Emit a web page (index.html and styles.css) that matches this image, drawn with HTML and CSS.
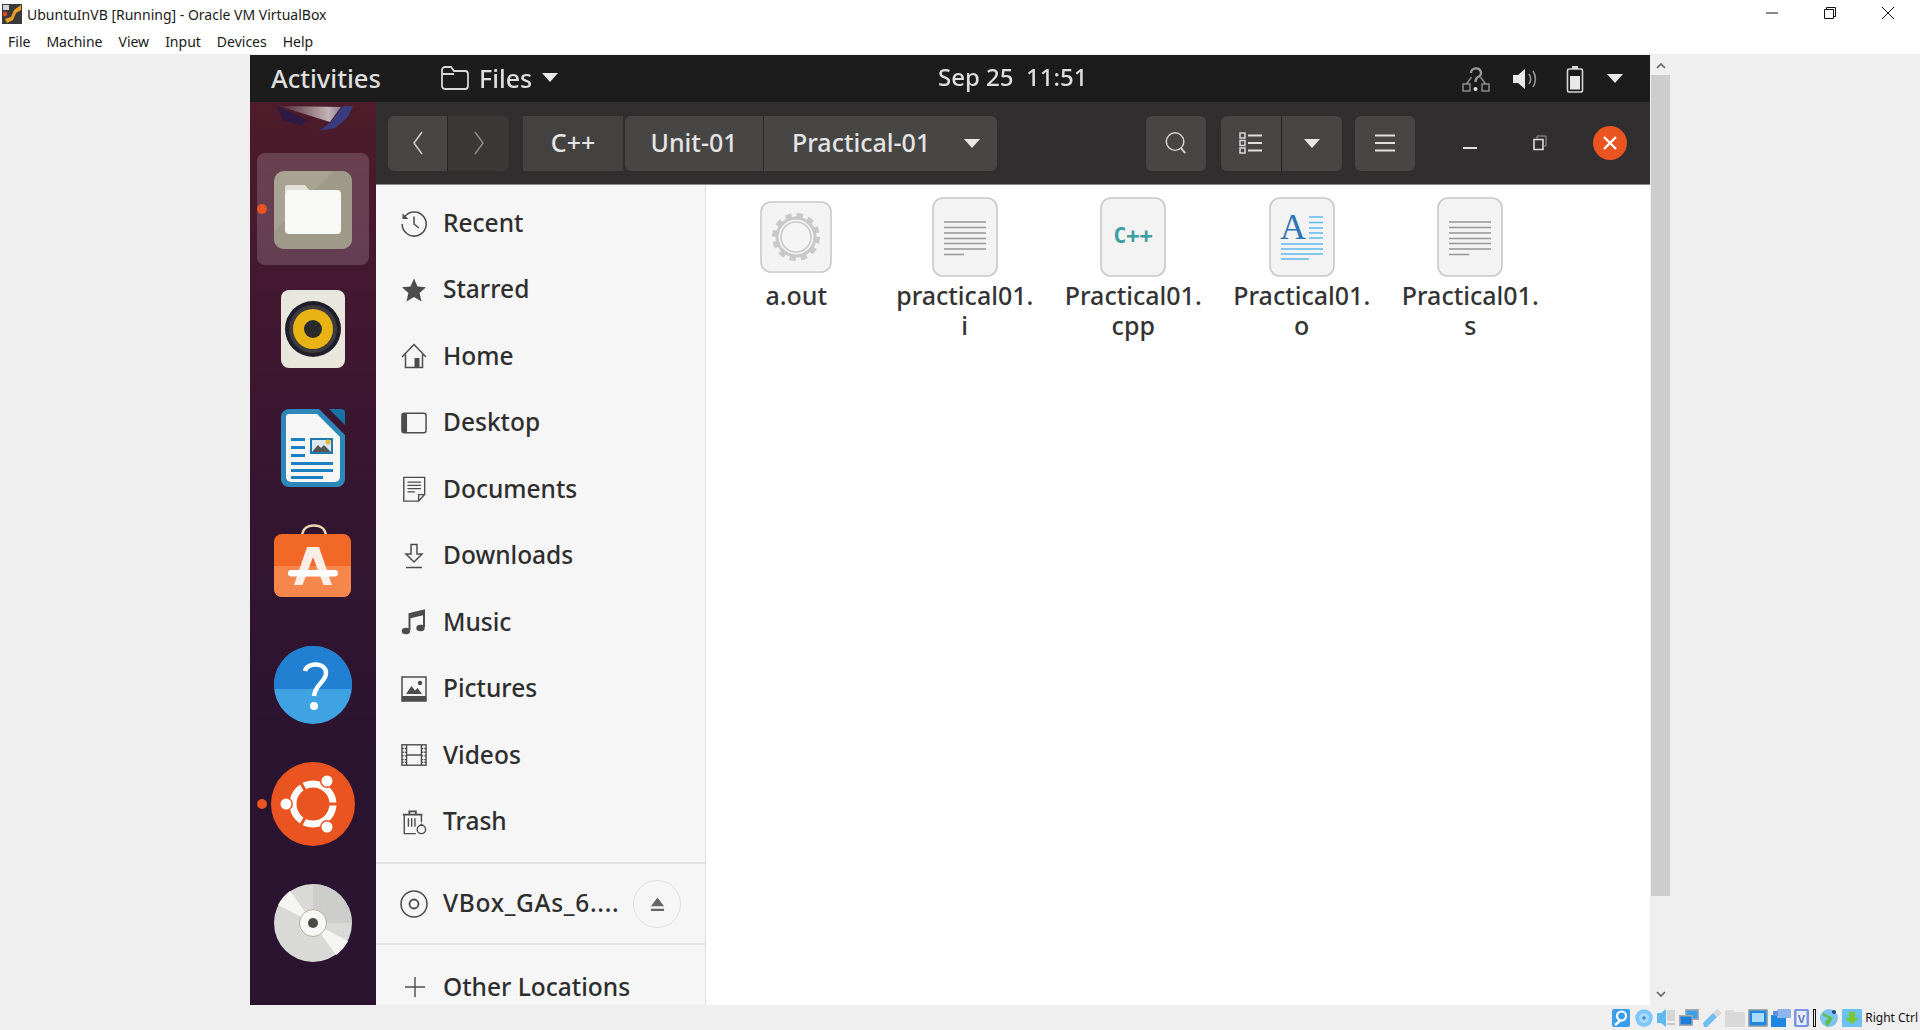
FILE: index.html
```html
<!DOCTYPE html>
<html lang="en">
<head>
<meta charset="utf-8">
<title>UbuntuInVB [Running] - Oracle VM VirtualBox</title>
<link rel="stylesheet" href="styles.css">
</head>
<body>
<div class="titlebar">
  <svg class="vbox-logo" viewBox="0 0 20 20"><rect width="20" height="20" fill="#3a3a3a"/><rect x="1" y="1" width="6" height="5" fill="#cfd6de"/><path d="M3 15 L9 13 L12 6 L19 1 V6 L14 9 L11 16 L5 19 Z" fill="#f0a020"/><circle cx="3" cy="10" r="2.4" fill="#d84a20"/></svg>
  <span class="title-text">UbuntuInVB [Running] - Oracle VM VirtualBox</span>
  <div class="win-controls">
    <svg class="win-btn" viewBox="0 0 14 14"><path d="M1 7H13" stroke="#111" fill="none"/></svg>
    <svg class="win-btn" viewBox="0 0 14 14"><path d="M1.5 3.5H10.5V12.5H1.5Z M3.5 3.5V1.5H12.5V10.5H10.5" stroke="#111" fill="none"/></svg>
    <svg class="win-btn" viewBox="0 0 14 14"><path d="M1 1L13 13M13 1L1 13" stroke="#111" fill="none"/></svg>
  </div>
</div>
<div class="menubar"><span>File</span><span>Machine</span><span>View</span><span>Input</span><span>Devices</span><span>Help</span></div>

<div class="host">
  <div class="vm">
    <div class="topbar">
      <span class="activities">Activities</span>
      <div class="appmenu">
        <svg class="ic-top-folder" viewBox="0 0 30 26"><path d="M2 5a3 3 0 0 1 3-3h6l3 4h11a3 3 0 0 1 3 3v12a3 3 0 0 1-3 3H5a3 3 0 0 1-3-3Z M2 9H14" fill="none" stroke="#d8d8d8" stroke-width="1.8"/></svg>
        <span>Files</span>
        <i class="caret"></i>
      </div>
      <span class="clock">Sep 25&nbsp; 11:51</span>
      <div class="tray">
        <svg class="tray-net" viewBox="0 0 30 28"><path d="M10 8a5 4.500 0 1 1 7 4c-2 1-2.500 2-2.500 5" fill="none" stroke="#9a9a9a" stroke-width="2.400"/><circle cx="14.500" cy="24" r="2" fill="#e0e0e0"/><path d="M2 19h7v7H2Z M21 19h7v7h-7Z M5.500 19l5-7M24.500 19l-5-7" fill="none" stroke="#8a8a8a" stroke-width="1.500"/></svg>
        <svg class="tray-vol" viewBox="0 0 26 24"><path d="M1 8h5l7-6v20l-7-6H1Z" fill="#e8e8e8"/><path d="M17 7c2 3 2 7 0 10M21 4c3 5 3 11 0 16" fill="none" stroke="#9a9a9a" stroke-width="1.500"/></svg>
        <svg class="tray-bat" viewBox="0 0 18 28"><path d="M6 1h6v3H6Z" fill="#d8d8d8"/><rect x="1.500" y="4" width="15" height="23" rx="1.500" fill="none" stroke="#d8d8d8" stroke-width="1.600"/><rect x="4" y="11" width="10" height="13.500" fill="#e8e8e8"/></svg>
        <i class="caret"></i>
      </div>
    </div>
    <div class="desk">
      <aside class="dock">
        <svg class="wall" viewBox="0 0 78 28"><defs><linearGradient id="wallTri" x1="0" x2="1" y1="0" y2="0"><stop offset="0" stop-color="#4a2035"/><stop offset=".8" stop-color="#c4b4b4"/><stop offset="1" stop-color="#8a7a90"/></linearGradient></defs><path d="M2 2L8 16L26 22L32 16Z" fill="#2d1b45"/><path d="M4 2L55 18L66 3Z" fill="url(#wallTri)"/><path d="M68 2H78L72 14L60 24L44 27L56 18Z" fill="#3a3c80"/></svg>
        <div class="slot active">
          <i class="dot"></i>
          <svg class="app" viewBox="0 0 78 78"><rect width="78" height="78" rx="10" fill="#a8a392"/><path d="M0 60 L60 0 H68 a10 10 0 0 1 10 10 V68 a10 10 0 0 1-10 10 H10 a10 10 0 0 1-10-10Z" fill="#9e9988"/><path d="M11 17a3 3 0 0 1 3-3h17l6 7H11Z" fill="#e3e0d7"/><rect x="11" y="19" width="56" height="44" rx="4" fill="#f8f8f7"/></svg>
        </div>
        <div class="slot">
          <svg class="app" viewBox="0 0 64 78"><rect width="64" height="78" rx="8" fill="#e9e6de"/><circle cx="32" cy="39" r="28" fill="#1f1f2b"/><circle cx="32" cy="39" r="24" fill="#3d3b3f"/><circle cx="32" cy="39" r="20" fill="#eab314"/><circle cx="32" cy="39" r="9" fill="#2b2b2b"/></svg>
        </div>
        <div class="slot">
          <svg class="app" viewBox="0 0 64 78"><path d="M8 0H38L64 26V70a8 8 0 0 1-8 8H8a8 8 0 0 1-8-8V8a8 8 0 0 1 8-8Z" fill="#2b88b8"/><path d="M48 0H60a4 4 0 0 1 4 4V16Z" fill="#1673a6"/><path d="M8 5H36L59 28V68a5 5 0 0 1-5 5H10a5 5 0 0 1-5-5V8a3 3 0 0 1 3-3Z" fill="#f6f6f6"/><path d="M10 29h14v3H10ZM10 37h14v3H10ZM10 45h14v3H10ZM10 53h42v3H10ZM10 60h42v3H10ZM10 67h32v3H10Z" fill="#1b80c0"/><rect x="29" y="29" width="23" height="16" fill="#1c7ab0"/><rect x="31" y="31" width="19" height="12" fill="#dce8ee"/><path d="M31 43l6-7 3 3 3-3 7 7Z" fill="#555"/><circle cx="47" cy="33" r="2.500" fill="#e8b830"/></svg>
        </div>
        <div class="slot">
          <svg class="app app-store" viewBox="0 0 78 78"><path d="M28 12C29 3 34 1.500 40 1.500S51 3 52 12" fill="none" stroke="#e9d7ae" stroke-width="2.500"/><rect x="0" y="10" width="77" height="63" rx="8" fill="#f26826"/><path d="M0 42H77V65a8 8 0 0 1-8 8H8a8 8 0 0 1-8-8Z" fill="#f6874c"/><path d="M33 23H45L58 61H49.500L39 33L28.500 61H20Z" fill="#fbeee6"/><rect x="14" y="46" width="50" height="6.500" rx="3.200" fill="#fff"/></svg>
        </div>
        <div class="slot">
          <svg class="app app-up" viewBox="0 0 78 78"><circle cx="39" cy="39" r="39" fill="#3fa2e2"/><path d="M.2 43A39 39 0 1 1 77.800 43Z" fill="#2280d2"/><path d="M31 25c2-9 21-9 21 2 0 9-11 11-12 23" fill="none" stroke="#fff" stroke-width="4.500"/><circle cx="40" cy="60" r="4" fill="#fff"/></svg>
        </div>
        <div class="slot">
          <i class="dot"></i>
          <svg class="app app-ubuntu app-up" viewBox="0 0 84 84"><circle cx="42" cy="42" r="42" fill="#e95420"/><circle cx="42" cy="42" r="20" fill="none" stroke="#fff" stroke-width="7"/><path d="M42 42H68M42 42L29 64.500M42 42L29 19.500" stroke="#e95420" stroke-width="3"/><circle cx="15" cy="42" r="7" fill="#e95420"/><circle cx="15" cy="42" r="5.500" fill="#fff"/><circle cx="56" cy="19" r="7" fill="#e95420"/><circle cx="56" cy="19" r="5.500" fill="#fff"/><circle cx="56" cy="65" r="7" fill="#e95420"/><circle cx="56" cy="65" r="5.500" fill="#fff"/></svg>
        </div>
        <div class="slot">
          <svg class="app app-up" viewBox="0 0 78 78"><circle cx="39" cy="39" r="39" fill="#d9d9d7"/><path d="M39 39L4 21A39 39 0 0 1 16 7Z" fill="#f5f5f2"/><path d="M39 0A39 39 0 0 1 78 39H39Z" fill="#cdcdcb"/><path d="M39 39L74 57A39 39 0 0 1 62 71Z" fill="#f5f5f2"/><circle cx="39" cy="39" r="13.500" fill="#f7f7f5" stroke="#b5ae9c" stroke-width="1"/><circle cx="39" cy="39" r="5" fill="#4a4a4a"/></svg>
        </div>
      </aside>
      <div class="window">
        <div class="header">
          <div class="btn-group nav">
            <button class="btn btn-back"><svg class="nav-ic" viewBox="0 0 14 26"><path d="M11 2L3 13L11 24" fill="none" stroke="#cfcfcf" stroke-width="1.500"/></svg></button>
            <button class="btn btn-forward"><svg class="nav-ic" viewBox="0 0 14 26"><path d="M3 2L11 13L3 24" fill="none" stroke="#8b8b8b" stroke-width="1.500"/></svg></button>
          </div>
          <div class="path">
            <span class="crumb crumb-cpp">C++</span>
            <span class="crumb crumb-unit">Unit-01</span>
            <span class="crumb crumb-prac">Practical-01<i class="caret"></i></span>
          </div>
          <div class="spring"></div>
          <button class="btn btn-single"><svg class="hd-ic" viewBox="0 0 26 26"><circle cx="12" cy="11.500" r="9.500" fill="none" stroke="#d4d4d4" stroke-width="1.600"/><path d="M18 18l5 6" stroke="#d4d4d4" stroke-width="2"/></svg></button>
          <div class="btn-group view">
            <button class="btn btn-list"><svg class="hd-ic" viewBox="0 0 24 24"><path d="M1 2h5v5H1Z M1 9.500h5v5H1Z M1 17h5v5H1Z" fill="none" stroke="#d8d8d8" stroke-width="1.500"/><path d="M9 4.500h14M9 12h14M9 19.500h14" stroke="#e0e0e0" stroke-width="1.800"/></svg></button>
            <button class="btn btn-drop"><i class="caret"></i></button>
          </div>
          <button class="btn btn-single btn-menu"><svg class="hd-ic" viewBox="0 0 24 24"><path d="M2 4.500H22M2 12H22M2 19.500H22" stroke="#e0e0e0" stroke-width="1.800"/></svg></button>
          <div class="wm">
            <svg class="wm-min" viewBox="0 0 14 3"><rect width="14" height="2" fill="#e0e0e0"/></svg>
            <svg class="wm-max" viewBox="0 0 14 16"><path d="M1 4.500h9v10H1Z" fill="none" stroke="#dcdcdc" stroke-width="1.600"/><path d="M4 4V1h9v10h-3" fill="none" stroke="#999" stroke-width="1"/></svg>
            <svg class="wm-close" viewBox="0 0 34 34"><circle cx="17" cy="17" r="17" fill="#e95420"/><path d="M11 11L23 23M23 11L11 23" stroke="#fff" stroke-width="2.400"/></svg>
          </div>
        </div>
        <div class="body">
          <nav class="sidebar">
            <div class="places">
              <a class="row"><svg class="ic" viewBox="0 0 26 26"><path d="M3.500 7A12 12 0 1 1 1.200 14" fill="none" stroke="#4c4c4c" stroke-width="1.500"/><path d="M1.500 3.500L7.500 9H1.500Z" fill="#4c4c4c"/><path d="M13 6.500V14l5 4" fill="none" stroke="#4c4c4c" stroke-width="1.500"/></svg><span>Recent</span></a>
              <a class="row"><svg class="ic" viewBox="0 0 26 26"><path d="M13 1.500L16.500 9.500L25 10.300L18.600 16L20.500 24.500L13 20L5.500 24.500L7.400 16L1 10.300L9.500 9.500Z" fill="#4c4c4c"/></svg><span>Starred</span></a>
              <a class="row"><svg class="ic" viewBox="0 0 26 26"><path d="M1 14L13 1.500L25 14M4.500 11.500V24.500H21.500V11.500" fill="none" stroke="#4c4c4c" stroke-width="1.500"/><rect x="13.500" y="15" width="5" height="9.500" fill="#4c4c4c"/></svg><span>Home</span></a>
              <a class="row"><svg class="ic" viewBox="0 0 28 24"><rect x="1" y="1.500" width="26" height="21" rx="2.500" fill="none" stroke="#4c4c4c" stroke-width="1.600"/><path d="M1 4a2.500 2.500 0 0 1 2.500-2.500H6.500V22.500H3.500A2.500 2.500 0 0 1 1 20Z" fill="#4c4c4c"/></svg><span>Desktop</span></a>
              <a class="row"><svg class="ic" viewBox="0 0 26 28"><path d="M2 1.500H24.500V20L18 27H2Z M24.500 20H18V27" fill="none" stroke="#4c4c4c" stroke-width="1.500"/><path d="M6 6.500H20.500M6 10H20.500M6 13.500H20.500M6 17H14" stroke="#4c4c4c" stroke-width="1.400"/></svg><span>Documents</span></a>
              <a class="row"><svg class="ic" viewBox="0 0 26 26"><path d="M10 1.500H16V11H21L13 19L5 11H10Z" fill="none" stroke="#4c4c4c" stroke-width="1.500"/><path d="M5 24.500H21" stroke="#4c4c4c" stroke-width="1.500"/></svg><span>Downloads</span></a>
              <a class="row"><svg class="ic" viewBox="0 0 26 26"><path d="M8.500 21V5L23 1.500V18" fill="none" stroke="#4c4c4c" stroke-width="2"/><path d="M8.500 5.500L23 2V6L8.500 9.500Z" fill="#4c4c4c"/><ellipse cx="5" cy="22" rx="4.200" ry="3.300" fill="#4c4c4c"/><ellipse cx="19.500" cy="19" rx="4.200" ry="3.300" fill="#4c4c4c"/></svg><span>Music</span></a>
              <a class="row"><svg class="ic" viewBox="0 0 26 26"><rect x="1" y="1" width="24" height="24" fill="none" stroke="#4c4c4c" stroke-width="1.500"/><rect x="1" y="20" width="24" height="5" fill="#4c4c4c"/><path d="M5 18L10.500 10L14 14.500L16.500 12L21 18Z" fill="#4c4c4c"/><circle cx="19" cy="7" r="2.200" fill="#4c4c4c"/></svg><span>Pictures</span></a>
              <a class="row"><svg class="ic" viewBox="0 0 28 24"><rect x="1" y="1" width="26" height="22" fill="none" stroke="#4c4c4c" stroke-width="1.500"/><path d="M6 1V23M22 1V23M6 12H22" fill="none" stroke="#4c4c4c" stroke-width="1.500"/><path d="M1 5H6M1 9H6M1 13H6M1 17H6M1 20H6M22 5H27M22 9H27M22 13H27M22 17H27M22 20H27" stroke="#4c4c4c" stroke-width="1.500" stroke-dasharray="2 1"/></svg><span>Videos</span></a>
              <a class="row"><svg class="ic" viewBox="0 0 28 28"><path d="M2 6H23M9 6V2.500H16V6" fill="none" stroke="#4c4c4c" stroke-width="2"/><path d="M3.500 6V26.500H16M22 6V14" fill="none" stroke="#4c4c4c" stroke-width="1.500"/><path d="M8 10V19M11.500 10V19M15 10V19" stroke="#4c4c4c" stroke-width="1.500"/><circle cx="22" cy="22" r="4.500" fill="none" stroke="#4c4c4c" stroke-width="1.500"/><path d="M22 15l-2 3h4Z" fill="#4c4c4c"/></svg><span>Trash</span></a>
            </div>
            <a class="row row-dev"><svg class="ic ic-wide" viewBox="0 0 28 28"><circle cx="14" cy="14" r="13" fill="none" stroke="#4c4c4c" stroke-width="1.500"/><circle cx="14" cy="14" r="4.500" fill="none" stroke="#4c4c4c" stroke-width="1.800"/></svg><span class="dev-name">VBox_GAs_6....</span><span class="eject"><svg class="ic-eject" viewBox="0 0 16 16"><path d="M8 1L15 10.500H1Z M1 13H15V15.500H1Z" fill="#666"/></svg></span></a>
            <a class="row row-other"><svg class="ic ic-plus" viewBox="0 0 22 22"><path d="M11 1V21M1 11H21" stroke="#4c4c4c" stroke-width="1.400"/></svg><span>Other Locations</span></a>
          </nav>
          <main class="files">
            <div class="file">
              <div class="thumb">
                <svg class="thumb-exe" viewBox="0 0 72 72"><rect x="1" y="1" width="70" height="70" rx="10" fill="#f3f3f3" stroke="#c9c9c9" stroke-width="1.600"/><circle cx="36" cy="36" r="21" fill="none" stroke="#c8c8c8" stroke-width="6" stroke-dasharray="6 5"/><circle cx="36" cy="36" r="19" fill="none" stroke="#c8c8c8" stroke-width="3"/><circle cx="36" cy="36" r="15" fill="#f5f5f5" stroke="#c8c8c8" stroke-width="1.500"/></svg>
              </div>
              <div class="name">a.out</div>
            </div>
            <div class="file">
              <div class="thumb">
                <svg class="thumb-doc" viewBox="0 0 66 80"><rect x="1" y="1" width="64" height="78" rx="10" fill="#f3f3f3" stroke="#c9c9c9" stroke-width="1.600"/><path d="M12 25H54M12 30.500H54M12 36H54M12 41.500H54M12 46.500H54M12 52H54M12 57.500H32" stroke="#979797" stroke-width="1.400"/></svg>
              </div>
              <div class="name">practical01.<br>i</div>
            </div>
            <div class="file">
              <div class="thumb">
                <svg class="thumb-doc" viewBox="0 0 66 80"><rect x="1" y="1" width="64" height="78" rx="10" fill="#f3f3f3" stroke="#c9c9c9" stroke-width="1.600"/><text class="cpp-mark" x="33" y="46" text-anchor="middle">C++</text></svg>
              </div>
              <div class="name">Practical01.<br>cpp</div>
            </div>
            <div class="file">
              <div class="thumb">
                <svg class="thumb-doc" viewBox="0 0 66 80"><rect x="1" y="1" width="64" height="78" rx="10" fill="#f3f3f3" stroke="#c9c9c9" stroke-width="1.600"/><text class="a-mark" x="24" y="42" text-anchor="middle">A</text><path d="M40 20H54M40 25.500H54M40 31H54M40 36H54M40 41H54M12 47H54M12 52H54M12 57H54M12 62H40" stroke="#5db7ee" stroke-width="1.500"/></svg>
              </div>
              <div class="name">Practical01.<br>o</div>
            </div>
            <div class="file">
              <div class="thumb">
                <svg class="thumb-doc" viewBox="0 0 66 80"><rect x="1" y="1" width="64" height="78" rx="10" fill="#f3f3f3" stroke="#c9c9c9" stroke-width="1.600"/><path d="M12 25H54M12 30.500H54M12 36H54M12 41.500H54M12 46.500H54M12 52H54M12 57.500H32" stroke="#979797" stroke-width="1.400"/></svg>
              </div>
              <div class="name">Practical01.<br>s</div>
            </div>
          </main>
        </div>
      </div>
    </div>
  </div>
  <div class="scrollbar">
    <svg class="sb-arrow" viewBox="0 0 10 6"><path d="M1 5L5 1L9 5" fill="none" stroke="#606060" stroke-width="1.600"/></svg>
    <div class="sb-track"><div class="sb-thumb"></div></div>
    <svg class="sb-arrow" viewBox="0 0 10 6"><path d="M1 1L5 5L9 1" fill="none" stroke="#606060" stroke-width="1.600"/></svg>
  </div>
</div>

<div class="statusbar">
  <svg class="st" viewBox="0 0 18 18"><rect width="18" height="18" rx="2" fill="#3a9fe8"/><circle cx="9.500" cy="7" r="4.500" fill="none" stroke="#fff" stroke-width="2.200"/><path d="M9 11L3 16" stroke="#fff" stroke-width="2.500"/></svg>
  <svg class="st st-cd" viewBox="0 0 18 18"><circle cx="9" cy="9" r="8.700" fill="#7cc7f5"/><circle cx="9" cy="9" r="5" fill="#a8dbfa"/><circle cx="9" cy="9" r="1.800" fill="#2f8ed8"/></svg>
  <svg class="st st-wide" viewBox="0 0 20 18"><path d="M1 4H5L10 0V18L5 14H1Z" fill="#5fb8f0"/><rect x="11" y="1" width="8" height="11" fill="#d5d5d5"/><path d="M11 16H19V14H11Z" fill="#c5c5c5"/></svg>
  <svg class="st st-wide" viewBox="0 0 20 18"><rect x="6" y="0" width="14" height="11" fill="#aaa"/><rect x="7.500" y="1.500" width="11" height="8" fill="#3a9fe8"/><rect x="0" y="6" width="14" height="11" fill="#aaa"/><rect x="1.500" y="7.500" width="11" height="8" fill="#1f7fd8"/></svg>
  <svg class="st st-wide" viewBox="0 0 20 18"><path d="M1 14L11 4L15 8L5 18H2Z" fill="#6dbdf2"/><path d="M11 4L15 0L20 4L15 8Z" fill="#d8d8d8"/></svg>
  <svg class="st st-wide" viewBox="0 0 20 18"><path d="M0 3a2 2 0 0 1 2-2h6l2 2h8a2 2 0 0 1 2 2v13H0Z" fill="#d9d9d9"/></svg>
  <svg class="st st-wide" viewBox="0 0 20 18"><rect width="20" height="18" rx="1" fill="#a8a8a8"/><rect x="1.500" y="1.500" width="17" height="15" fill="#1e88e0"/><rect x="4" y="4" width="12" height="9" fill="#a9dcfa"/></svg>
  <svg class="st st-wide" viewBox="0 0 20 18"><rect y="6" width="15" height="12" fill="#1e88e0"/><rect x="6" y="0" width="14" height="9" rx="1.500" fill="#8fb4ec"/><path d="M2 2h5v5H2Z" fill="#5f8fdc"/></svg>
  <svg class="st st-v" viewBox="0 0 15 18"><rect width="15" height="18" rx="2" fill="#7a93dc"/><rect x="2.500" y="2" width="10" height="14" fill="#e6ecfa"/><text class="st-v-mark" x="7.500" y="13.500" text-anchor="middle">V</text></svg>
  <i class="st-sep"></i>
  <svg class="st st-wide" viewBox="0 0 20 18"><circle cx="10" cy="9" r="9" fill="#7cc4ee"/><path d="M4 4L14 9L8 18L6 13L10 9L4 7Z" fill="#5cc040"/><circle cx="15" cy="3" r="2" fill="#1a4a80"/></svg>
  <svg class="st st-wide" viewBox="0 0 20 18"><rect width="20" height="18" rx="1" fill="#6cc0f2"/><path d="M7 3H13V9H17L10 15L3 9H7Z" fill="#78c830"/></svg>
  <span class="st-text">Right Ctrl</span>
</div>
</body>
</html>
```

FILE: styles.css
```css
* { box-sizing: border-box; }
html, body { margin: 0; padding: 0; height: 100%; overflow: hidden; }
body {
  width: 1920px;
  height: 1030px;
  display: flex;
  flex-direction: column;
  background: #efefef;
  font-family: "Noto Sans", "Open Sans", sans-serif;
}

/* Host window chrome */
.titlebar {
  height: 27px;
  background: #fff;
  display: flex;
  align-items: center;
  padding-left: 2px;
  flex: none;
}
.vbox-logo { width: 20px; height: 20px; margin-right: 5px; }
.title-text { font-size: 14px; color: #1a1a1a; margin-top: 2px; }
.win-controls { margin-left: auto; display: flex; gap: 44px; padding-right: 25px; margin-top: -1px; }
.win-btn { width: 14px; height: 14px; display: block; }

.menubar {
  height: 27px;
  background: #fff;
  display: flex;
  align-items: center;
  font-size: 14px;
  color: #1a1a1a;
  padding: 2px 0 0 8px;
  gap: 16px;
  flex: none;
}

.host {
  height: 951px;
  display: flex;
  padding-left: 250px;
  background: #efefef;
  flex: none;
}

/* Guest display */
.vm {
  width: 1400px;
  height: 950px;
  margin-top: 1px;
  display: flex;
  flex-direction: column;
  overflow: hidden;
  font-family: "Noto Sans", sans-serif;
  font-weight: 500;
  filter: blur(.35px);
}

.topbar {
  height: 47px;
  background: #1c1c1c;
  color: #dfdfdf;
  display: flex;
  align-items: center;
  font-size: 24px;
  position: relative;
  padding: 0 0 2px 21px;
  flex: none;
}
.activities { width: 169px; font-size: 25.5px; }
.appmenu { display: flex; align-items: center; font-size: 25px; }
.ic-top-folder { width: 30px; height: 26px; margin-right: 9px; }
.clock {
  position: absolute;
  left: 688px;
  font-size: 24px;
  white-space: nowrap;
  margin-top: -2px;
}
.caret {
  display: inline-block;
  width: 0;
  height: 0;
  border-left: 8px solid transparent;
  border-right: 8px solid transparent;
  border-top: 9px solid #e8e8e8;
}
.appmenu .caret { margin-left: 10px; }
.tray { margin-left: auto; display: flex; align-items: center; padding-right: 27px; margin-top: 2px; }
.tray-net { width: 30px; height: 28px; margin-right: 21px; }
.tray-vol { width: 26px; height: 24px; margin-right: 28px; }
.tray-bat { width: 18px; height: 28px; margin-right: 23px; }

.desk { flex: 1; display: flex; min-height: 0; }

/* Dock */
.dock {
  width: 126px;
  flex: none;
  position: relative;
  padding-top: 48px;
  display: flex;
  flex-direction: column;
  background: linear-gradient(180deg, #4e1c2a 0%, #431830 20%, #351530 45%, #2a1430 75%, #2a1430 100%);
  overflow: hidden;
}
.wall { position: absolute; left: 25px; top: 2px; width: 78px; height: 28px; }
.slot {
  height: 119px;
  flex: none;
  display: flex;
  align-items: center;
  justify-content: center;
  position: relative;
}
.slot.active::before {
  content: "";
  position: absolute;
  left: 7px;
  top: 3px;
  width: 112px;
  height: 112px;
  border-radius: 8px;
  background: rgba(255, 255, 255, .17);
}
.app { height: 78px; width: auto; position: relative; display: block; }
.app-ubuntu { height: 84px; }
.app-store { margin-bottom: 7px; }
.app-up { margin-bottom: 2px; }
.dot {
  position: absolute;
  left: 7px;
  top: 54px;
  width: 10px;
  height: 10px;
  border-radius: 50%;
  background: #e95420;
  z-index: 1;
}

/* Nautilus window */
.window { flex: 1; display: flex; flex-direction: column; min-width: 0; }
.header {
  height: 83px;
  flex: none;
  background: #302e2e;
  border-bottom: 1px solid #8a8a8a;
  display: flex;
  align-items: center;
  padding: 0 0 0 12px;
  color: #e4e4e4;
}
.btn {
  border: 0;
  padding: 0;
  height: 55px;
  background: #474645;
  display: flex;
  align-items: center;
  justify-content: center;
  font: inherit;
  color: inherit;
}
.btn-group { display: flex; }
.nav { width: 121px; }
.btn-back { width: 60px; border-radius: 6px 0 0 6px; border-right: 1px solid #252525; }
.btn-forward { width: 61px; border-radius: 0 6px 6px 0; background: #3a3938; }
.nav-ic { width: 14px; height: 26px; }
.path { display: flex; margin-left: 14px; font-size: 25px; }
.crumb {
  height: 55px;
  background: #474645;
  display: flex;
  align-items: center;
  justify-content: center;
  padding-bottom: 2px;
}
.crumb-cpp { width: 100px; background: #434241; margin-right: 2px; }
.crumb-unit { width: 139px; border-radius: 6px 0 0 6px; border-right: 1px solid #2c2c2c; }
.crumb-prac { width: 233px; border-radius: 0 6px 6px 0; justify-content: flex-start; padding-left: 28px; }
.crumb-prac .caret { margin-left: auto; margin-right: 17px; margin-top: 2px; }
.spring { flex: 1; }
.btn-single { width: 60px; border-radius: 6px; }
.hd-ic { width: 24px; height: 24px; }
.view { margin-left: 15px; width: 121px; }
.btn-list { width: 61px; border-radius: 6px 0 0 6px; border-right: 1px solid #252525; }
.btn-drop { width: 60px; border-radius: 0 6px 6px 0; }
.btn-menu { margin-left: 13px; }
.wm { display: flex; align-items: center; margin-left: 48px; padding-right: 23px; }
.wm-min { width: 14px; height: 3px; margin-top: 10px; }
.wm-max { width: 14px; height: 16px; margin-left: 56px; margin-top: 0; }
.wm-close { width: 34px; height: 34px; margin-left: 46px; }

.body { flex: 1; display: flex; min-height: 0; }

/* Sidebar */
.sidebar {
  width: 330px;
  flex: none;
  background: #f6f6f6;
  border-right: 1px solid #dedede;
  overflow: hidden;
  color: #2e2e2e;
  font-size: 24.5px;
}
.places { padding: 5px 0 7px; border-bottom: 2px solid #e4e4e4; }
.row {
  display: flex;
  align-items: center;
  height: 66.5px;
  padding-left: 25px;
}
.row > span:not(.eject) { margin-top: -2px; }
.ic { width: 26px; height: 26px; flex: none; margin-right: 16px; overflow: visible; }
.ic-wide { width: 28px; height: 28px; margin-right: 15px; margin-left: -1px; }
.ic-plus { width: 22px; height: 22px; margin: 0 17px 0 3px; }
.dev-name { letter-spacing: .7px; }
.row-dev { height: 81px; border-bottom: 2px solid #e4e4e4; white-space: nowrap; }
.row-other { margin-top: 9px; }
.eject {
  width: 48px;
  height: 48px;
  border-radius: 50%;
  border: 1px solid #e0e0e0;
  margin-left: auto;
  margin-right: 24px;
  flex: none;
  display: flex;
  align-items: center;
  justify-content: center;
}
.ic-eject { width: 15px; height: 16px; }

/* Files */
.files {
  flex: 1;
  background: #fff;
  display: flex;
  align-items: flex-start;
  padding: 9px 0 0 6px;
  color: #333;
  font-size: 25px;
}
.file { width: 168.5px; flex: none; text-align: center; }
.thumb { height: 86px; display: flex; align-items: center; justify-content: center; }
.thumb-exe { width: 72px; height: 72px; }
.thumb-doc { width: 66px; height: 80px; }
.name { line-height: 30px; }
.cpp-mark { font-family: "DejaVu Sans Mono", monospace; font-weight: 700; font-size: 22px; fill: #3f9ea0; }
.a-mark { font-family: "Liberation Serif", serif; font-size: 36px; font-weight: 400; fill: #2f74b5; }

/* Scrollbar */
.scrollbar { width: 19px; margin-left: 1px; height: 950px; display: flex; flex-direction: column; align-items: center; padding-top: 9px; }
.sb-arrow { width: 10px; height: 6px; flex: none; }
.sb-track { height: 922px; width: 19px; padding-top: 6px; }
.sb-thumb { height: 821px; background: #cdcdcd; }

/* Status bar */
.statusbar {
  height: 25px;
  flex: none;
  display: flex;
  align-items: center;
  justify-content: flex-end;
  gap: 3px;
  padding-right: 2px;
}
.st { width: 18px; height: 18px; flex: none; }
.st-cd { margin-left: 2px; }
.st-wide { width: 20px; height: 18px; }
.st-v { width: 15px; }
.st-v-mark { font: 700 11px "Liberation Sans", sans-serif; fill: #5a6fc0; }
.st-sep { width: 3px; height: 18px; border: 1px solid #111; margin-left: 1px; }
.st-text { font-size: 12px; color: #111; white-space: nowrap; }
```
